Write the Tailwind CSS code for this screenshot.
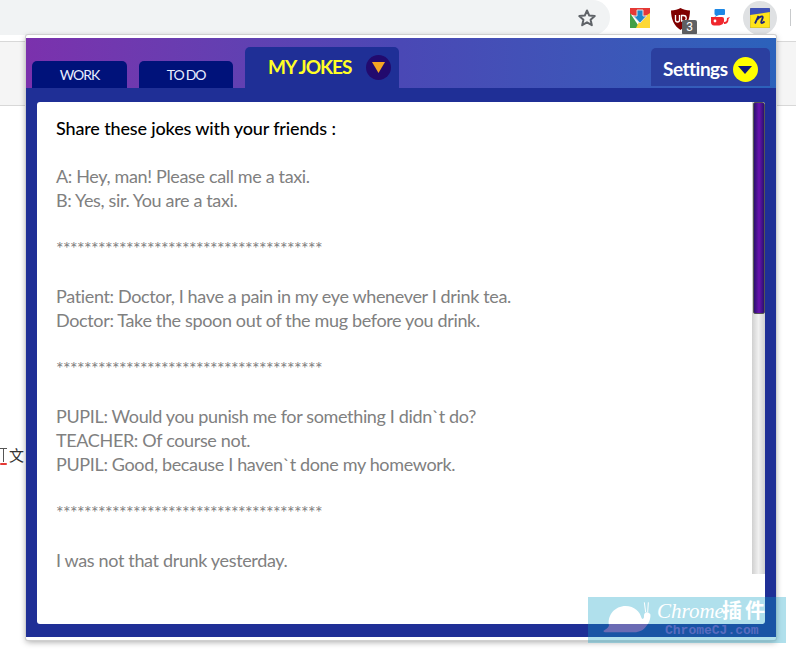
<!DOCTYPE html>
<html>
<head>
<meta charset="utf-8">
<script src="https://cdn.jsdelivr.net/npm/@tailwindcss/browser@4"></script>
</head>
<body class="m-0">
<div class="relative w-[796px] h-[653px] overflow-hidden bg-white font-['Lato','Noto_Sans',sans-serif]">
  <!-- browser toolbar -->
  <div class="h-[35px] bg-white relative">
    <div class="absolute left-0 top-0 w-[610px] h-[35px] bg-[#f1f3f4] rounded-r-[18px]"></div>
    <svg class="absolute left-[577px] top-[8px]" width="20" height="20" viewBox="0 0 24 24" fill="none" stroke="#5f6368" stroke-width="2.400" stroke-linejoin="round"><path d="M12 3l2.700 6.100 6.600.6-5 4.400 1.500 6.500L12 17.200l-5.800 3.400 1.500-6.500-5-4.400 6.600-.6z"/></svg>
    <!-- download icon -->
    <svg class="absolute left-[630px] top-[8px]" width="20" height="20" viewBox="0 0 20 20">
      <path d="M0 0h20v6l-10 4L0 6z" fill="#e53935"/>
      <path d="M0 5l10 15H0z" fill="#43a047"/>
      <path d="M20 5v15H6l4-8z" fill="#fdd835"/>
      <path d="M7 2h6v6h3.500L10 15 3.500 8H7z" fill="#1e88c9" stroke="#e0e0e0" stroke-width="1"/>
    </svg>
    <!-- uBlock shield -->
    <svg class="absolute left-[671px] top-[8px]" width="19" height="22" viewBox="0 0 19 22">
      <path d="M9.500 0C7 1.500 3.500 2.500 0 2.500 0 11 3 18 9.500 22 16 18 19 11 19 2.500c-3.500 0-7-1-9.500-2.500z" fill="#800000"/>
      <path d="M4.500 7v5a2 2 0 0 0 4 0V7M10.500 13V7.500h2a2.500 2.500 0 0 1 0 5.500z" fill="none" stroke="#fff" stroke-width="1.300"/>
    </svg>
    <div class="absolute left-[682px] top-[20px] w-[15px] h-[15px] rounded-[2px] bg-[#5f6063] text-white text-[12px] leading-[15px] text-center font-['Roboto',sans-serif]">3</div>
    <!-- whale -->
    <svg class="absolute left-[710px] top-[9px]" width="20" height="18" viewBox="0 0 20 18">
      <rect x="4.500" y="0" width="10.500" height="6" rx="1" fill="#1e88e5"/>
      <path d="M6 6l-1.500 2L9 6z" fill="#1e88e5"/>
      <path d="M1 8h11a2 2 0 0 1 2 2v2c0 3-3 4.500-6 4.500H4c-2 0-3-1.500-3-3.500z" fill="#f0272d"/>
      <path d="M14 13c2 0 3-1 3-4l3-1-1.500 2c0 4-2 5-4.500 5z" fill="#f0272d"/>
      <circle cx="5" cy="12" r="1.400" fill="#fff"/>
    </svg>
    <!-- active extension -->
    <div class="absolute left-[743px] top-[1px] w-[34px] h-[34px] rounded-full bg-[#dfe1e3]"></div>
    <svg class="absolute left-[750px] top-[8px]" width="20" height="20" viewBox="0 0 20 20">
      <path d="M1 0h18a1 1 0 0 1 1 1v18a1 1 0 0 1-1 1H1a1 1 0 0 1-1-1V1a1 1 0 0 1 1-1z" fill="#ffe41a" stroke="#8a8a50" stroke-width=".5"/>
      <path d="M0 7V1a1 1 0 0 1 1-1h18a1 1 0 0 1 1 1v3z" fill="#3f51b5"/>
      <path d="M5 15.500l3.500-7.500-1.200 3.500c2-2.800 5.500-4.300 5.500-2.200 0 1.700-2.300 4.200-1.500 5.500 .6.900 2.200-.3 3.200-1.500" fill="none" stroke="#1a237e" stroke-width="1.800"/>
    </svg>
    <div class="absolute left-[790px] top-[9px] w-px h-[17px] bg-[#c8cacc]"></div>
  </div>

  <!-- page behind popup -->
  <div class="h-[6px] bg-white"></div>
  <div class="h-[65px] bg-[#f5f5f5] border-t border-b border-[#d8d8d8]"></div>
  <div class="absolute left-[9px] top-[443px] text-[15px] leading-[24px] text-[#333] font-['Noto_Sans_CJK_SC',sans-serif]">文</div>
  <div class="absolute left-0 top-[448px] w-[7px] h-px bg-[#555]"></div>
  <div class="absolute left-[3px] top-[448px] w-px h-[14px] bg-[#555]"></div>
  <div class="absolute left-0 top-[463px] w-[7px] h-[2px] bg-[#e53935] rounded"></div>

  <!-- popup -->
  <div class="absolute left-[26px] top-[35px] w-[750px] h-[605px] bg-white pt-[3px] pb-[3px] rounded-[2px] shadow-[0_0_0_1px_#cfcfcf,0_2px_6px_rgba(0,0,0,0.35)] flex flex-col">
    <!-- header -->
    <div class="h-[50px] shrink-0 bg-gradient-to-r from-[#7b31ad] via-[#4a48b5] to-[#2b62bb] flex items-end px-[6px]">
      <div class="w-[95px] h-[27px] rounded-t-[5px] bg-[#00127a] text-[#e8eeff] text-[14px] tracking-[-1px] flex items-center justify-center">WORK</div>
      <div class="w-[94px] h-[27px] rounded-t-[5px] bg-[#00127a] text-[#e8eeff] text-[14px] tracking-[-1.2px] flex items-center justify-center ml-[12px]">TO DO</div>
      <div class="w-[154px] h-[41px] rounded-t-[5px] bg-[#1f2f96] ml-[12px] flex items-center pl-[23px] pb-[1px]">
        <span class="text-[#ffff26] text-[19px] font-bold tracking-[-1px]">MY JOKES</span>
        <span class="ml-[15px] w-[25px] h-[25px] rounded-full bg-[#220a6e] flex items-center justify-center">
          <svg width="13" height="11" viewBox="0 0 13 11"><path d="M0 0h13L6.500 11z" fill="#f5a623"/></svg>
        </span>
      </div>
      <div class="ml-auto mb-[2px] w-[119px] h-[38px] rounded-t-[5px] bg-[#2b3f9f] flex items-center pl-[12px] pt-[5px]">
        <span class="text-white text-[19px] font-bold tracking-[-0.5px]">Settings</span>
        <span class="ml-[5px] w-[25px] h-[25px] rounded-full bg-[#ffff00] flex items-center justify-center">
          <svg width="14" height="8" viewBox="0 0 14 8"><path d="M0 0h14L7 8z" fill="#0f1a7c"/></svg>
        </span>
      </div>
    </div>
    <!-- body -->
    <div class="flex-1 bg-[#1f2f96] pt-[14px] px-[11px] pb-[13px] min-h-0">
      <div class="relative h-[522px] bg-white rounded-[3px] overflow-hidden pl-[19px] pt-[14px] text-[18px] leading-[24px] tracking-[-0.35px] text-[#808080]">
        <div class="text-black font-medium tracking-[-0.15px]">Share these jokes with your friends :</div>
        <div class="h-[24px]"></div>
        <div>A: Hey, man! Please call me a taxi.</div>
        <div>B: Yes, sir. You are a taxi.</div>
        <div class="h-[24px]"></div>
        <div class="tracking-[-0.65px]">**************************************</div>
        <div class="h-[24px]"></div>
        <div>Patient: Doctor, I have a pain in my eye whenever I drink tea.</div>
        <div>Doctor: Take the spoon out of the mug before you drink.</div>
        <div class="h-[24px]"></div>
        <div class="tracking-[-0.65px]">**************************************</div>
        <div class="h-[24px]"></div>
        <div>PUPIL: Would you punish me for something I didn`t do?</div>
        <div>TEACHER: Of course not.</div>
        <div>PUPIL: Good, because I haven`t done my homework.</div>
        <div class="h-[24px]"></div>
        <div class="tracking-[-0.65px]">**************************************</div>
        <div class="h-[24px]"></div>
        <div>I was not that drunk yesterday.</div>
        <!-- scrollbar -->
        <div class="absolute right-0 top-0 w-[13px] h-[472px] bg-gradient-to-r from-[#d0d0d0] via-[#f0f0f0] to-[#d0d0d0]">
          <div class="h-[212px] ml-[1px] bg-gradient-to-r from-[#2a0f70] via-[#6a10b0] to-[#2a0f70] border border-[#555] rounded-[2px]"></div>
        </div>
      </div>
    </div>
  </div>

  <!-- watermark -->
  <div class="absolute left-[588px] top-[597px] w-[198px] h-[46px] bg-[#0fa0c5]/33 overflow-hidden">
    <svg class="absolute left-[-3px] top-[-2px]" width="205" height="50" viewBox="0 0 615 150">
      <defs>
        <linearGradient id="snail" gradientUnits="userSpaceOnUse" x1="0" y1="0" x2="0" y2="150">
          <stop offset="0.58" stop-color="#fff"/>
          <stop offset="0.58" stop-color="#6b6bb4"/>
        </linearGradient>
      </defs>
      <path d="M55 108C62 102 68 100 72 92 66 60 90 33 122 33 148 33 165 50 170 70 175 75 178 68 177 60 178 50 190 48 196 58 198 72 190 88 180 98 170 108 160 112 140 112L70 112C62 112 56 112 55 108Z" fill="url(#snail)"/>
      <path d="M178 22l4 30M190 22l-2 30" stroke="#fff" stroke-width="3" fill="none"/>
    </svg>
    <div class="absolute left-[69px] top-[2px] text-white text-[21px] leading-[24px] italic font-['Liberation_Serif',serif] whitespace-nowrap">Chrome</div>
    <div class="absolute left-[134px] top-[1px] text-white text-[20px] leading-[24px] font-bold tracking-[3px] font-['Noto_Sans_CJK_SC',sans-serif] whitespace-nowrap">插件</div>
    <div class="absolute left-[77px] top-[26px] text-[#5a6cc0] text-[13px] leading-[15px] font-bold font-['Liberation_Mono',monospace] whitespace-nowrap">ChromeCJ.com</div>
  </div>
</div>
</body>
</html>
